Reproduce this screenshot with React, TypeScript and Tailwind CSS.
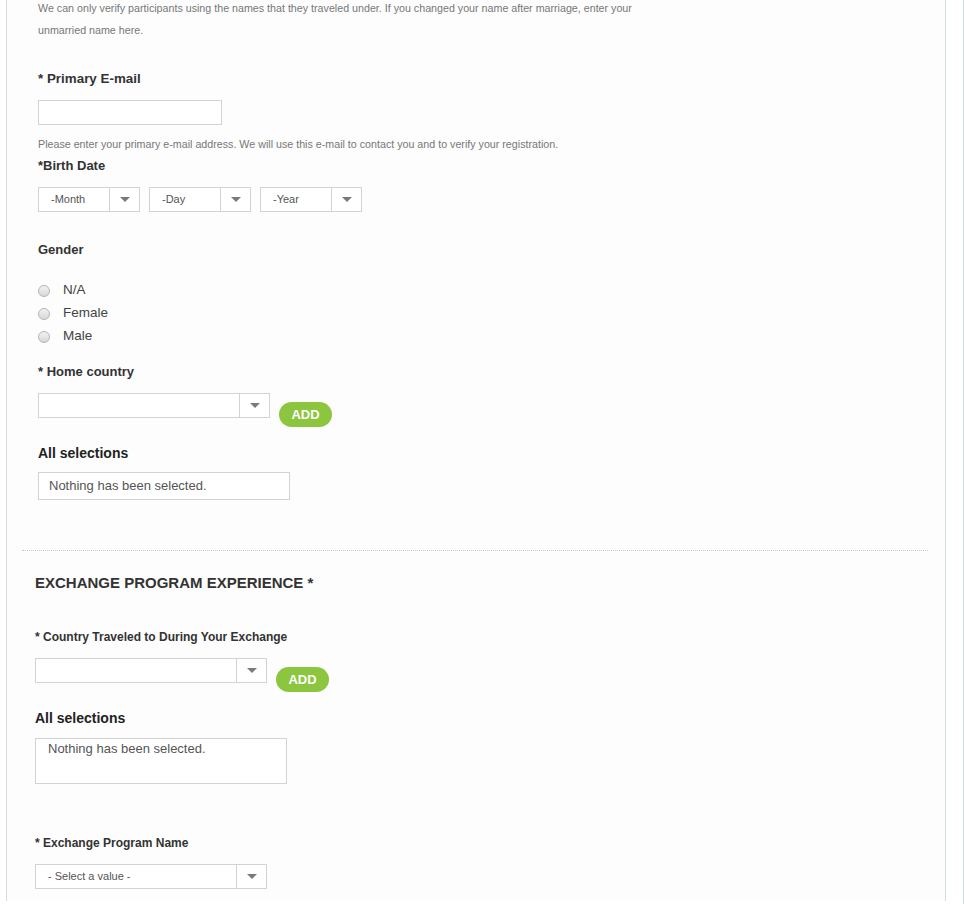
import React from 'react';

const font = { fontFamily: '"Liberation Sans", Arial, sans-serif' };

function Arrow() {
  return (
    <svg width="10" height="6" viewBox="0 0 10 6" className="block">
      <path d="M0 0 L10 0 L5 5 Z" fill="#7a7a7a" />
    </svg>
  );
}

function Select({ width, text, textClass = 'text-[11px]' }: { width: string; text?: string; textClass?: string }) {
  return (
    <div className={`flex h-[25px] border border-[#d3d3d3] bg-white ${width}`}>
      <div className={`flex-1 flex items-center pl-3 text-[#555] ${textClass}`}>{text}</div>
      <div className="w-[30px] border-l border-[#d3d3d3] flex items-center justify-center">
        <Arrow />
      </div>
    </div>
  );
}

function AddButton() {
  return (
    <button className="mt-[9px] ml-[9px] h-[25px] w-[53px] rounded-full bg-[#8cc63e] text-white text-[13px] font-bold leading-none">
      ADD
    </button>
  );
}

function Radio({ label }: { label: string }) {
  return (
    <div className="flex items-center h-[23px]">
      <span className="w-[12px] h-[12px] rounded-full border border-[#b5b5b5] bg-gradient-to-b from-[#f2f2f2] to-[#d8d8d8]" />
      <span className="ml-[13px] text-[13.5px] text-[#444]">{label}</span>
    </div>
  );
}

export default function App() {
  return (
    <div className="relative w-[964px] h-[904px] overflow-hidden bg-white" style={font}>
      <div className="ml-[6px] w-[940px] min-h-[904px] border-l border-r border-[#d2dce2] bg-[#fdfdfd]">
        {/* Personal info */}
        <div className="pl-[31px]">
          <p className="mt-[-3px] text-[10.7px] leading-[22px] text-[#777] w-[610px]">
            We can only verify participants using the names that they traveled under. If you changed your name after marriage, enter your unmarried name here.
          </p>

          <div className="mt-[29px] text-[13.4px] leading-[18px] font-bold text-[#333]">* Primary E-mail</div>
          <div className="mt-[12px] h-[25px] w-[184px] border border-[#d3d3d3] bg-white" />
          <p className="mt-[11px] text-[10.7px] leading-[16px] text-[#777]">
            Please enter your primary e-mail address. We will use this e-mail to contact you and to verify your registration.
          </p>

          <div className="mt-[5px] text-[13px] leading-[18px] font-bold text-[#333]">*Birth Date</div>
          <div className="mt-[12px] flex gap-[9px]">
            <Select width="w-[102px]" text="-Month" />
            <Select width="w-[102px]" text="-Day" />
            <Select width="w-[102px]" text="-Year" />
          </div>

          <div className="mt-[29px] text-[13px] leading-[18px] font-bold text-[#333]">Gender</div>
          <div className="mt-[20px]">
            <Radio label="N/A" />
            <Radio label="Female" />
            <Radio label="Male" />
          </div>

          <div className="mt-[15px] text-[13px] leading-[18px] font-bold text-[#333]">* Home country</div>
          <div className="mt-[12px] flex items-start">
            <Select width="w-[232px]" />
            <AddButton />
          </div>

          <div className="mt-[17px] text-[14px] leading-[18px] font-bold text-[#222]">All selections</div>
          <div className="mt-[10px] w-[252px] h-[28px] border border-[#d3d3d3] bg-white pl-[10px] flex items-center text-[13px] text-[#555]">
            Nothing has been selected.
          </div>
        </div>

        {/* Divider */}
        <div className="mt-[50px] ml-[15px] w-[906px] border-t border-dotted border-[#c8c8c8]" />

        {/* Exchange program */}
        <div className="pl-[28px]">
          <h2 className="mt-[23px] text-[15px] leading-[18px] font-bold text-[#333]">EXCHANGE PROGRAM EXPERIENCE *</h2>

          <div className="mt-[37px] text-[12px] leading-[16px] font-bold text-[#333]">* Country Traveled to During Your Exchange</div>
          <div className="mt-[13px] flex items-start">
            <Select width="w-[232px]" />
            <AddButton />
          </div>

          <div className="mt-[17px] text-[14px] leading-[18px] font-bold text-[#222]">All selections</div>
          <div className="mt-[11px] w-[252px] h-[46px] border border-[#d3d3d3] bg-white pl-[12px] pt-[1px] text-[13px] leading-[18px] text-[#555]">
            Nothing has been selected.
          </div>

          <div className="mt-[51px] text-[12px] leading-[16px] font-bold text-[#333]">* Exchange Program Name</div>
          <div className="mt-[13px]">
            <Select width="w-[232px]" text="- Select a value -" />
          </div>
        </div>
      </div>
      <div className="absolute top-0 left-[963px] w-px h-full bg-[#d2dce2]" />
    </div>
  );
}
